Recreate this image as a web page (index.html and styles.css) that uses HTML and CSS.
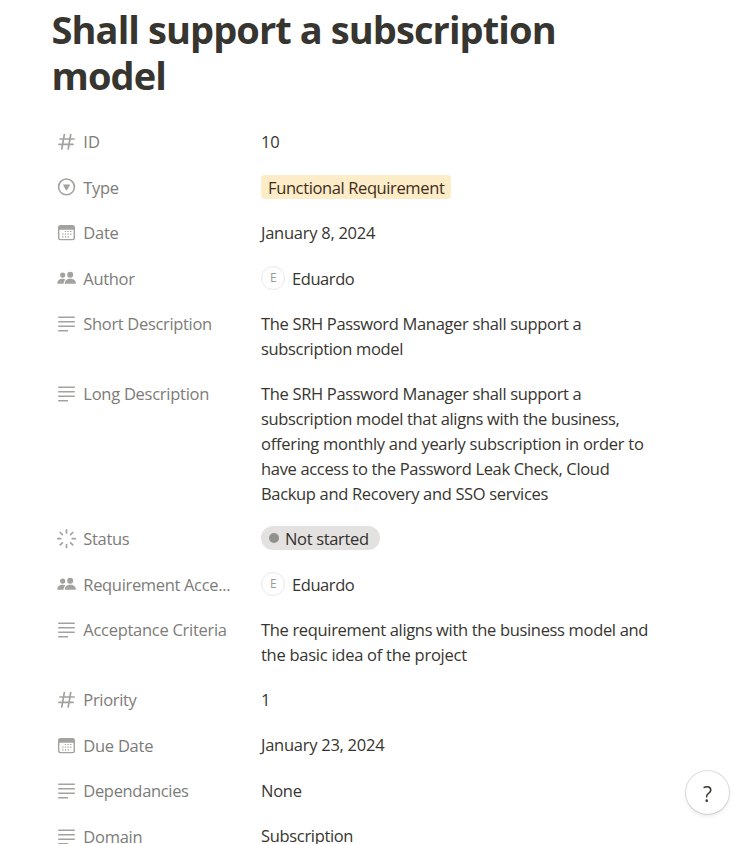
FILE: index.html
```html
<!DOCTYPE html>
<html lang="en">
<head>
<meta charset="utf-8">
<title>Shall support a subscription model</title>
<link rel="stylesheet" href="styles.css">
</head>
<body>
<svg class="defs" aria-hidden="true">
  <symbol id="number" viewBox="0 0 20 20"><path d="M7.3 2.6 4.8 17M13.7 2.6 11.2 17M3.1 7H17M2 12.4H16" fill="none" stroke="currentColor" stroke-width="1.7" stroke-linecap="round"/></symbol>
  <symbol id="select" viewBox="0 0 20 20"><circle cx="9.5" cy="8.9" r="7.9" fill="none" stroke="currentColor" stroke-width="1.6"/><path d="M6.4 6.5h6.2q.6 0 .3.5l-2.800 5q-.6.8-1.2 0l-2.800-5q-.3-.5.3-.5z" fill="currentColor"/></symbol>
  <symbol id="date" viewBox="0 0 20 20"><path fill-rule="evenodd" fill="currentColor" d="M3.5 2h12a2.5 2.5 0 0 1 2.5 2.5v10.3a2.5 2.5 0 0 1-2.5 2.5h-12A2.5 2.5 0 0 1 1 14.8V4.5A2.5 2.5 0 0 1 3.5 2zM2.4 6.7v8q0 1.2 1.2 1.2h11.8q1.2 0 1.2-1.2v-8z"/><path d="M7.8 8.5h6.8M5.2 11.2h9.4M5.2 13.8h6.7" stroke="currentColor" stroke-width="1.2" stroke-dasharray="1.3 1.35"/></symbol>
  <symbol id="people" viewBox="0 0 20 20"><g fill="currentColor"><circle cx="5.7" cy="6.1" r="2.6"/><circle cx="13.2" cy="5.7" r="3"/><path d="M.3 14.2C.3 11.8 2.5 9.8 5.5 9.8q1.7 0 2.9.7Q6.6 12 6.6 14.2v.5H1q-.7 0-.7-.5zM7.7 14.2c0-2.5 2.5-4.4 5.6-4.4s5.6 1.9 5.6 4.4q0 .5-.7.5H8.4q-.7 0-.7-.5z"/></g></symbol>
  <symbol id="lines" viewBox="0 0 20 20"><path d="M1.2 3.2h16.6M1.2 7.700h16.600M1.200 12.200h16.600M1.200 16.700H11" stroke="currentColor" stroke-width="1.500"/></symbol>
  <symbol id="status" viewBox="0 0 20 20"><path d="M9.5.9v3M9.500 15.500v3M.7 9.700h3M15.300 9.700h3M3.300 3.500l2.100 2.100M13.600 13.800l2.100 2.100M3.300 15.900l2.100-2.100M13.600 5.600l2.100-2.100" stroke="currentColor" stroke-width="1.700" stroke-linecap="round"/></symbol>
</svg>
<main class="page">
  <h1 class="title">Shall support a subscription<br>model</h1>
  <div class="properties">
    <div class="row"><div class="name"><svg class="icon"><use href="#number"/></svg><span class="label loose">ID</span></div><div class="value snug">10</div></div>
    <div class="row"><div class="name"><svg class="icon"><use href="#select"/></svg><span class="label">Type</span></div><div class="value"><span class="tag">Functional Requirement</span></div></div>
    <div class="row"><div class="name"><svg class="icon"><use href="#date"/></svg><span class="label snug">Date</span></div><div class="value snug">January 8, 2024</div></div>
    <div class="row"><div class="name"><svg class="icon"><use href="#people"/></svg><span class="label">Author</span></div><div class="value person"><span class="avatar">E</span><span class="person-name">Eduardo</span></div></div>
    <div class="row"><div class="name"><svg class="icon"><use href="#lines"/></svg><span class="label">Short Description</span></div><div class="value">The SRH Password Manager shall support a<br>subscription model</div></div>
    <div class="row"><div class="name"><svg class="icon"><use href="#lines"/></svg><span class="label snug">Long Description</span></div><div class="value">The SRH Password Manager shall support a<br>subscription model that aligns with the business,<br><span class="wide">offering monthly and yearly subscription in order to</span><br>have access to the Password Leak Check, Cloud<br>Backup and Recovery and SSO services</div></div>
    <div class="row"><div class="name"><svg class="icon"><use href="#status"/></svg><span class="label">Status</span></div><div class="value"><span class="status">Not started</span></div></div>
    <div class="row"><div class="name"><svg class="icon"><use href="#people"/></svg><span class="label">Requirement Acce...</span></div><div class="value person"><span class="avatar">E</span><span class="person-name">Eduardo</span></div></div>
    <div class="row"><div class="name"><svg class="icon"><use href="#lines"/></svg><span class="label wide">Acceptance Criteria</span></div><div class="value">The requirement aligns with the business model and<br><span class="snug">the basic idea of the project</span></div></div>
    <div class="row"><div class="name"><svg class="icon"><use href="#number"/></svg><span class="label">Priority</span></div><div class="value">1</div></div>
    <div class="row"><div class="name"><svg class="icon"><use href="#date"/></svg><span class="label snug">Due Date</span></div><div class="value snug">January 23, 2024</div></div>
    <div class="row"><div class="name"><svg class="icon"><use href="#lines"/></svg><span class="label">Dependancies</span></div><div class="value snug">None</div></div>
    <div class="row"><div class="name"><svg class="icon"><use href="#lines"/></svg><span class="label snug">Domain</span></div><div class="value">Subscription</div></div>
  </div>
</main>
<button class="help" type="button">?</button>
</body>
</html>
```
FILE: styles.css
```css
* { box-sizing: border-box; }
html, body { height: 100%; overflow: hidden; }
body {
  margin: 0;
  background: #fff;
  color: #37352f;
  font: 16.5px/25px "Open Sans", "Noto Sans", sans-serif;
  letter-spacing: -0.33px;
}
.defs { display: none; }
.page { padding: 6px 51.5px 0; }
.title {
  margin: 0;
  font-size: 38px;
  line-height: 46px;
  font-weight: 700;
  letter-spacing: -0.91px;
}
.properties { padding: 20.8px 0 0 5.5px; }
.row {
  display: grid;
  grid-template-columns: 204px 1fr;
  min-height: 45.5px;
  padding: 10px 0;
}
.name {
  display: flex;
  align-items: center;
  gap: 6.3px;
  height: 25.5px;
  color: #7d7c78;
}
.icon { flex: none; width: 20px; height: 20px; margin-top: 1px; color: #a3a29e; }
.label { white-space: nowrap; }
.value { white-space: nowrap; }
.wide { letter-spacing: -0.28px; }
.snug { letter-spacing: -0.26px; }
.loose { letter-spacing: 0; }
.tag, .status {
  display: inline-flex;
  align-items: center;
  height: 24px;
  vertical-align: top;
}
.tag {
  margin-top: 1px;
  padding: 0 7px;
  border-radius: 4px;
  background: #fdecc8;
  color: #402c1b;
  letter-spacing: -0.38px;
}
.status {
  padding: 1px 11px 0 8px;
  gap: 6px;
  border-radius: 12px;
  background: #e3e2e0;
  color: #32302c;
  letter-spacing: -0.34px;
}
.status::before {
  content: "";
  width: 10px;
  height: 10px;
  border-radius: 50%;
  background: #91918e;
}
.person { display: flex; align-items: center; gap: 7px; height: 25px; letter-spacing: -0.42px; }
.person-name { padding-top: 1.5px; }
.avatar {
  display: flex;
  align-items: center;
  justify-content: center;
  width: 24px;
  height: 24px;
  border: 1px solid #e9e9e8;
  border-radius: 50%;
  color: #9b9a97;
  font-size: 12px;
  line-height: 1;
}
.help {
  position: fixed;
  right: 4px;
  bottom: 30px;
  width: 43px;
  height: 43px;
  padding: 0;
  border: 0;
  border-radius: 50%;
  background: #fff;
  box-shadow: 0 0 0 1px rgba(15, 15, 15, .13), 0 2px 4px rgba(15, 15, 15, .1);
  color: #37352f;
  font: 500 21px/46px "Open Sans", sans-serif;
}
```
